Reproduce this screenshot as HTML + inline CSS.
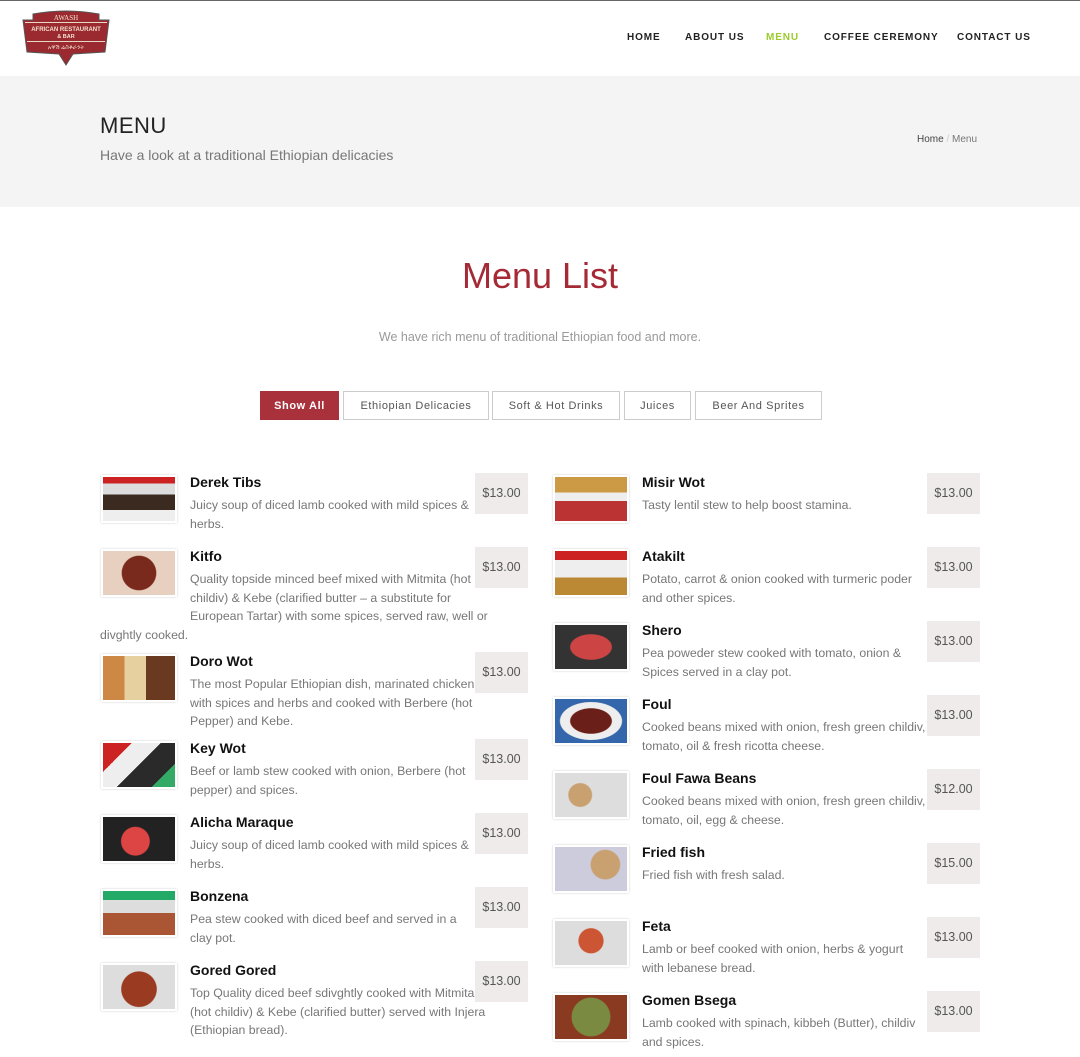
<!DOCTYPE html>
<html><head><meta charset="utf-8"><style>
*{margin:0;padding:0;box-sizing:border-box}
body{width:1080px;height:1025px;overflow:hidden;background:#fff;font-family:"Liberation Sans",Arial,sans-serif;position:relative}
.topline{position:absolute;top:0;left:0;width:1080px;height:1px;background:#666}
.nav{position:absolute;top:32px;font-size:10px;font-weight:bold;letter-spacing:.9px;color:#222}
.hero{position:absolute;top:76px;left:0;width:1080px;height:131px;background:#f4f4f4}
.item{position:absolute;width:428px}
.in{width:392px}
.sp{float:right;width:16px;height:41px}
.img{float:left;width:76px;height:48px;margin:2px 13px 16px 1px;border:2px solid #fff;box-shadow:0 0 2px #ccc}
.price{position:absolute;right:0;top:0;width:53px;height:41px;background:#efebeb;color:#555;font-size:12.5px;line-height:41px;text-align:center}
.t{font-size:14px;font-weight:bold;color:#111;line-height:18px}
.d{font-size:12.3px;color:#777;line-height:18.5px;margin-top:5px}
.btn{position:absolute;top:391px;height:29px;border:1px solid #ccc;font-size:11px;letter-spacing:.6px;color:#555;line-height:29px;text-align:center}
</style></head><body>
<div class="topline"></div>
<svg style="position:absolute;left:21px;top:10px" width="90" height="56" viewBox="0 0 90 56">
<path d="M12 4 Q45 -2 78 4 L78 10 L88 10 L84 42 L52 44 L45 55 L38 44 L6 42 L2 10 L12 10Z" fill="#9a2a30" stroke="#555" stroke-width="1"/>
<rect x="4" y="12" width="82" height="1" fill="#e8d8c8"/>
<rect x="6" y="31" width="78" height="1" fill="#e8d8c8"/>
<text x="45" y="10" font-size="7" fill="#f3e2d0" text-anchor="middle" font-family="Liberation Serif">AWASH</text>
<text x="45" y="21" font-size="6" fill="#f3e2d0" text-anchor="middle" font-weight="bold">AFRICAN RESTAURANT</text>
<text x="45" y="28" font-size="5.5" fill="#f3e2d0" text-anchor="middle" font-weight="bold">&amp; BAR</text>
<text x="45" y="39" font-size="6" fill="#f3e2d0" text-anchor="middle">አዋሽ ሬስቶራንት</text>
</svg>
<div class="nav" style="left:627px">HOME</div>
<div class="nav" style="left:685px">ABOUT US</div>
<div class="nav" style="left:766px;color:#9ccc2c">MENU</div>
<div class="nav" style="left:824px">COFFEE CEREMONY</div>
<div class="nav" style="left:957px">CONTACT US</div>
<div class="hero"></div>
<div style="position:absolute;left:100px;top:113px;font-size:22px;letter-spacing:.5px;color:#222">MENU</div>
<div style="position:absolute;left:100px;top:147px;font-size:14px;color:#777">Have a look at a traditional Ethiopian delicacies</div>
<div style="position:absolute;left:917px;top:134px;font-size:10px;color:#444">Home <span style="color:#ccc">/</span> <span style="color:#777">Menu</span></div>
<div style="position:absolute;left:0;width:1080px;top:255px;text-align:center;font-size:36px;color:#a52a36">Menu List</div>
<div style="position:absolute;left:0;width:1080px;top:330px;text-align:center;font-size:12.5px;color:#999">We have rich menu of traditional Ethiopian food and more.</div>
<div class="btn" style="left:260px;width:79px;background:#a8313b;border-color:#a8313b;color:#fff;font-weight:bold">Show All</div>
<div class="btn" style="left:343px;width:146px">Ethiopian Delicacies</div>
<div class="btn" style="left:492px;width:128px">Soft &amp; Hot Drinks</div>
<div class="btn" style="left:624px;width:67px">Juices</div>
<div class="btn" style="left:695px;width:127px">Beer And Sprites</div>

<div class="item" style="left:100px;top:473px"><div class="price">$13.00</div><div class="in"><div class="img" style="background:linear-gradient(#c22 0 15%,#ddd 15% 40%,#3a2a20 40% 75%,#eee 75%)"></div><div class="sp"></div><div class="t">Derek Tibs</div><div class="d">Juicy soup of diced lamb cooked with mild spices &amp; herbs.</div></div></div>
<div class="item" style="left:100px;top:547px"><div class="price">$13.00</div><div class="in"><div class="img" style="background:radial-gradient(circle at 50% 50%,#7a2a1c 0 40%,#e8d0c0 42%)"></div><div class="sp"></div><div class="t">Kitfo</div><div class="d">Quality topside minced beef mixed with Mitmita (hot childiv) &amp; Kebe (clarified butter – a substitute for European Tartar) with some spices, served raw, well or divghtly cooked.</div></div></div>
<div class="item" style="left:100px;top:652px"><div class="price">$13.00</div><div class="in"><div class="img" style="background:linear-gradient(90deg,#c84 0 30%,#e6d0a0 30% 60%,#6a3a20 60%)"></div><div class="sp"></div><div class="t">Doro Wot</div><div class="d">The most Popular Ethiopian dish, marinated chicken with spices and herbs and cooked with Berbere (hot Pepper) and Kebe.</div></div></div>
<div class="item" style="left:100px;top:739px"><div class="price">$13.00</div><div class="in"><div class="img" style="background:linear-gradient(135deg,#c22 0 25%,#eee 25% 50%,#2a2a2a 50% 80%,#3a6 80%)"></div><div class="sp"></div><div class="t">Key Wot</div><div class="d">Beef or lamb stew cooked with onion, Berbere (hot pepper) and spices.</div></div></div>
<div class="item" style="left:100px;top:813px"><div class="price">$13.00</div><div class="in"><div class="img" style="background:radial-gradient(circle at 45% 55%,#d44 0 30%,#222 32%)"></div><div class="sp"></div><div class="t">Alicha Maraque</div><div class="d">Juicy soup of diced lamb cooked with mild spices &amp; herbs.</div></div></div>
<div class="item" style="left:100px;top:887px"><div class="price">$13.00</div><div class="in"><div class="img" style="background:linear-gradient(#2a6 0 20%,#ddd 20% 50%,#a53 50%)"></div><div class="sp"></div><div class="t">Bonzena</div><div class="d">Pea stew cooked with diced beef and served in a clay pot.</div></div></div>
<div class="item" style="left:100px;top:961px"><div class="price">$13.00</div><div class="in"><div class="img" style="background:radial-gradient(circle at 50% 55%,#9a3a20 0 40%,#ddd 42%)"></div><div class="sp"></div><div class="t">Gored Gored</div><div class="d">Top Quality diced beef sdivghtly cooked with Mitmita (hot childiv) &amp; Kebe (clarified butter) served with Injera (Ethiopian bread).</div></div></div>

<div class="item" style="left:552px;top:473px"><div class="price">$13.00</div><div class="in"><div class="img" style="background:linear-gradient(#c94 0 35%,#eee 35% 55%,#b33 55%)"></div><div class="sp"></div><div class="t">Misir Wot</div><div class="d">Tasty lentil stew to help boost stamina.</div></div></div>
<div class="item" style="left:552px;top:547px"><div class="price">$13.00</div><div class="in"><div class="img" style="background:linear-gradient(#c22 0 20%,#eee 20% 60%,#b83 60%)"></div><div class="sp"></div><div class="t">Atakilt</div><div class="d">Potato, carrot &amp; onion cooked with turmeric poder and other spices.</div></div></div>
<div class="item" style="left:552px;top:621px"><div class="price">$13.00</div><div class="in"><div class="img" style="background:radial-gradient(ellipse at 50% 50%,#c44 0 40%,#333 42%)"></div><div class="sp"></div><div class="t">Shero</div><div class="d">Pea poweder stew cooked with tomato, onion &amp; Spices served in a clay pot.</div></div></div>
<div class="item" style="left:552px;top:695px"><div class="price">$13.00</div><div class="in"><div class="img" style="background:radial-gradient(ellipse at 50% 50%,#6a2018 0 40%,#eee 42% 60%,#36a 62%)"></div><div class="sp"></div><div class="t">Foul</div><div class="d">Cooked beans mixed with onion, fresh green childiv, tomato, oil &amp; fresh ricotta cheese.</div></div></div>
<div class="item" style="left:552px;top:769px"><div class="price">$12.00</div><div class="in"><div class="img" style="background:radial-gradient(circle at 35% 50%,#c9a070 0 22%,#ddd 24%)"></div><div class="sp"></div><div class="t">Foul Fawa Beans</div><div class="d">Cooked beans mixed with onion, fresh green childiv, tomato, oil, egg &amp; cheese.</div></div></div>
<div class="item" style="left:552px;top:843px"><div class="price">$15.00</div><div class="in"><div class="img" style="background:radial-gradient(circle at 70% 40%,#c9a070 0 25%,#ccd 27%)"></div><div class="sp"></div><div class="t">Fried fish</div><div class="d">Fried fish with fresh salad.</div></div></div>
<div class="item" style="left:552px;top:917px"><div class="price">$13.00</div><div class="in"><div class="img" style="background:radial-gradient(circle at 50% 45%,#c53 0 28%,#ddd 30%)"></div><div class="sp"></div><div class="t">Feta</div><div class="d">Lamb or beef cooked with onion, herbs &amp; yogurt with lebanese bread.</div></div></div>
<div class="item" style="left:552px;top:991px"><div class="price">$13.00</div><div class="in"><div class="img" style="background:radial-gradient(circle at 50% 50%,#7a8a40 0 45%,#8a3a20 47%)"></div><div class="sp"></div><div class="t">Gomen Bsega</div><div class="d">Lamb cooked with spinach, kibbeh (Butter), childiv and spices.</div></div></div>
</body></html>
